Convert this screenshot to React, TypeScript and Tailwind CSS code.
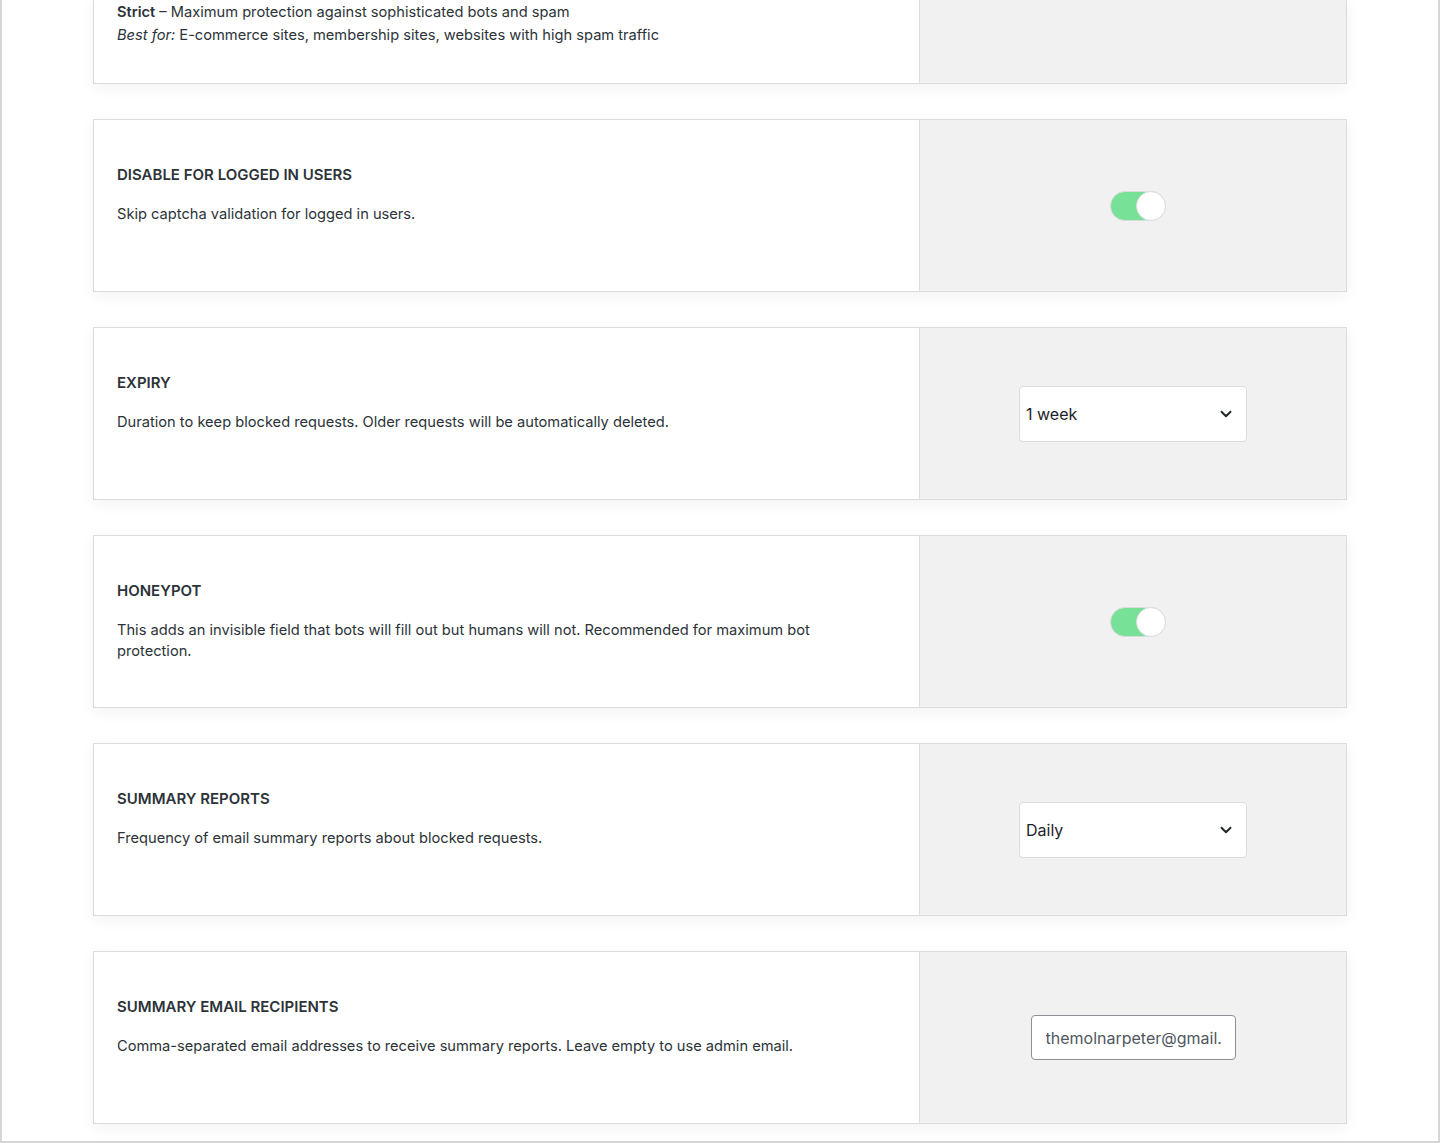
import { ChevronDown } from "lucide-react";

type Control =
  | { kind: "toggle" }
  | { kind: "select"; value: string }
  | { kind: "input"; value: string };

const settings: { title: string; description: string; control: Control }[] = [
  {
    title: "Disable for logged in users",
    description: "Skip captcha validation for logged in users.",
    control: { kind: "toggle" },
  },
  {
    title: "Expiry",
    description:
      "Duration to keep blocked requests. Older requests will be automatically deleted.",
    control: { kind: "select", value: "1 week" },
  },
  {
    title: "Honeypot",
    description:
      "This adds an invisible field that bots will fill out but humans will not. Recommended for maximum bot protection.",
    control: { kind: "toggle" },
  },
  {
    title: "Summary reports",
    description: "Frequency of email summary reports about blocked requests.",
    control: { kind: "select", value: "Daily" },
  },
  {
    title: "Summary email recipients",
    description:
      "Comma-separated email addresses to receive summary reports. Leave empty to use admin email.",
    control: { kind: "input", value: "themolnarpeter@gmail.com" },
  },
];

function Toggle() {
  return (
    <div className="relative ml-[10px] h-[30px] w-[56px] rounded-full bg-[#77e197] border border-[#dcdcdc]">
      <span className="absolute right-[-1px] top-[-1px] h-[30px] w-[30px] rounded-full bg-white border border-[#dcdcdc]" />
    </div>
  );
}

function Select({ value }: { value: string }) {
  return (
    <div className="flex h-[56px] w-[228px] items-center justify-between rounded-[4px] border border-[#dcdcde] bg-white pl-[6px] pr-[11px] text-[16px] text-[#1d2327]">
      <span>{value}</span>
      <ChevronDown className="h-[18px] w-[18px] text-[#1d2327]" strokeWidth={2.5} />
    </div>
  );
}

function TextInput({ value }: { value: string }) {
  return (
    <input
      readOnly
      value={value}
      className="h-[45px] w-[205px] rounded-[4px] border border-[#8c8f94] bg-white px-[14px] text-[16px] text-[#50575e] outline-none"
    />
  );
}

function SettingCard({
  title,
  description,
  control,
}: (typeof settings)[number]) {
  return (
    <div className="flex h-[173px] border border-[#dcdcde] bg-white shadow-[0_4px_14px_rgba(0,0,0,0.05)]">
      <div className="w-[825px] shrink-0 pl-[23px] pr-[30px] pt-[44px]">
        <h3 className="text-[15px] font-semibold uppercase leading-[22px] text-[#2c3338]">
          {title}
        </h3>
        <p className="mt-[18px] max-w-[720px] text-[14.65px] leading-[21px] text-[#2c3338]">
          {description}
        </p>
      </div>
      <div className="flex flex-1 items-center justify-center border-l border-[#dcdcde] bg-[#f1f1f1]">
        {control.kind === "toggle" && <Toggle />}
        {control.kind === "select" && <Select value={control.value} />}
        {control.kind === "input" && <TextInput value={control.value} />}
      </div>
    </div>
  );
}

export default function App() {
  return (
    <div
      className="min-h-[1143px] border-x-2 border-b-2 border-[#d6d6d6] bg-white"
      style={{ fontFamily: "Inter, 'Noto Sans', sans-serif" }}
    >
      <div className="mx-[91px] flex flex-col gap-[35px] pb-[17px]">
        {/* Strictness card, cut off at the top */}
        <div className="flex h-[84px] border-x border-b border-[#dcdcde] bg-white shadow-[0_4px_14px_rgba(0,0,0,0.05)]">
          <div className="w-[825px] shrink-0 pl-[23px] pt-[1px] text-[14.65px] leading-[23px] text-[#2c3338]">
            <p>
              <strong className="font-semibold">Strict</strong> – Maximum protection
              against sophisticated bots and spam
            </p>
            <p>
              <em>Best for:</em> E-commerce sites, membership sites, websites with
              high spam traffic
            </p>
          </div>
          <div className="flex-1 border-l border-[#dcdcde] bg-[#f1f1f1]" />
        </div>

        {settings.map((s) => (
          <SettingCard key={s.title} {...s} />
        ))}
      </div>
    </div>
  );
}
